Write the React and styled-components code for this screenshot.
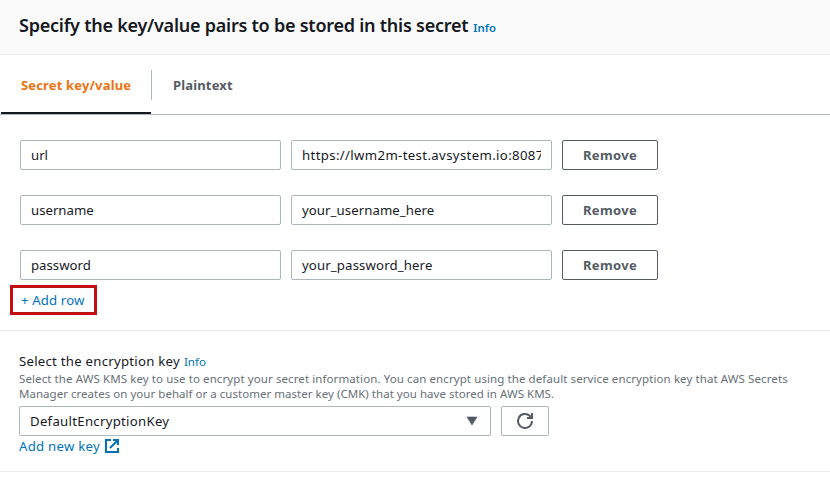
import React from "react";
import styled, { createGlobalStyle } from "styled-components";

const GlobalStyle = createGlobalStyle`
  *, *::before, *::after { box-sizing: border-box; }
  body {
    margin: 0;
    background: #fff;
    color: #16191f;
    font-family: "Noto Sans", "Open Sans", sans-serif;
    font-size: 13.2px;
  }
  button, input { font: inherit; margin: 0; }
`;

const Page = styled.main`
  width: 830px;
  height: 490px;
  overflow: hidden;
`;

const Header = styled.header`
  height: 55px;
  padding: 11px 19px 0;
  display: flex;
  align-items: baseline;
  gap: 5px;
  background: #fafafa;
  border-bottom: 1px solid #eaeded;
`;

const Title = styled.h1`
  margin: 0;
  font-size: 18px;
  line-height: 28px;
  font-weight: 600;
  letter-spacing: -0.24px;
  white-space: nowrap;
`;

const InfoLink = styled.a`
  color: #0073bb;
  font-size: ${(p) => (p.$strong ? "11.3px" : "11.5px")};
  font-weight: ${(p) => (p.$strong ? 600 : 400)};
  text-decoration: none;
`;

const Tabs = styled.nav`
  height: 60px;
  padding-left: 1px;
  display: flex;
  border-bottom: 1px solid #aab7b8;
`;

const Tab = styled.button`
  height: 59px;
  width: ${(p) => p.$width}px;
  padding: 2px 0 0 ${(p) => (p.$active ? 20 : 21)}px;
  border: 0;
  border-bottom: 2px solid ${(p) => (p.$active ? "#16191f" : "transparent")};
  background: none;
  color: ${(p) => (p.$active ? "#ec7211" : "#545b64")};
  font-size: 13px;
  font-weight: 700;
  letter-spacing: 0.16px;
  text-align: left;
  white-space: nowrap;
`;

const TabDivider = styled.span`
  width: 1px;
  height: 30px;
  margin-top: 15px;
  background: #aab7b8;
`;

const Pairs = styled.section`
  height: 216px;
  padding: 25px 10px 0;
  border-bottom: 1px solid #eaeded;
`;

const PairRow = styled.div`
  display: grid;
  grid-template-columns: 261px 261px 96px;
  column-gap: 10px;
  padding-left: 10px;
  margin-bottom: ${(p) => (p.$last ? 5 : 25)}px;
`;

const Field = styled.input`
  width: 100%;
  height: 30px;
  padding: 0 10px;
  border: 1px solid #aab7b8;
  border-radius: 2px;
  background: #fff;
  color: #16191f;
  outline: 0;
  letter-spacing: ${(p) => p.$tracking || 0}px;
`;

const RemoveButton = styled.button`
  height: 30px;
  padding: 0;
  border: 1px solid #545b64;
  border-radius: 2px;
  background: #fff;
  color: #545b64;
  font-size: 13px;
  font-weight: 700;
  letter-spacing: 0.35px;
`;

const AddRow = styled.button`
  display: block;
  width: 87px;
  height: 30px;
  padding: 0 0 0 8px;
  border: 3px solid #c40f11;
  background: #fff;
  color: #0073bb;
  letter-spacing: 0.13px;
  text-align: left;
  white-space: nowrap;
`;

const Encryption = styled.section`
  height: 141px;
  padding: 20px 19px 0;
  border-bottom: 1px solid #eaeded;
`;

const LabelLine = styled.div`
  height: 20px;
  display: flex;
  align-items: baseline;
  gap: 4px;
  line-height: 20px;
  white-space: nowrap;
`;

const Label = styled.label`
  letter-spacing: 0.25px;
`;

const Hint = styled.p`
  margin: 0 0 5px;
  height: 30px;
  color: #687078;
  font-size: 11.5px;
  line-height: 15px;
  white-space: nowrap;
`;

const HintLine = styled.span`
  display: block;
  letter-spacing: ${(p) => p.$tracking}px;
`;

const KeyRow = styled.div`
  display: flex;
  gap: 10px;
`;

const Select = styled.button`
  width: 472px;
  height: 30px;
  padding: 0 12px 0 10px;
  display: flex;
  align-items: center;
  justify-content: space-between;
  border: 1px solid #aab7b8;
  border-radius: 2px;
  background: #fff;
  color: #16191f;
  letter-spacing: 0.28px;
`;

const RefreshButton = styled.button`
  width: 48px;
  height: 30px;
  padding: 0;
  display: flex;
  align-items: center;
  justify-content: center;
  border: 1px solid #aab7b8;
  border-radius: 2px;
  background: #fff;
`;

const NewKeyLink = styled.a`
  display: flex;
  align-items: center;
  gap: 5px;
  height: 20px;
  color: #0073bb;
  letter-spacing: 0.25px;
  text-decoration: none;
  white-space: nowrap;
`;

const Caret = () => (
  <svg width="12" height="10" viewBox="0 0 12 10" aria-hidden="true">
    <path d="M1 1h10L6 9z" fill="#545b64" stroke="#545b64" strokeWidth=".6" />
  </svg>
);

const RefreshIcon = () => (
  <svg width="18" height="18" viewBox="0 0 18 18" fill="none" stroke="#545b64" strokeWidth="2" aria-hidden="true">
    <path d="M16 9a7 7 0 1 1-2.3-5.2L16 6" />
    <path d="M16 1v5h-5" />
  </svg>
);

const ExternalIcon = () => (
  <svg width="14" height="14" viewBox="0 0 14 14" fill="none" stroke="#0073bb" strokeWidth="2" aria-hidden="true">
    <path d="M6 1H1v12h12V9M8 1h5v5M13 1L5 9" />
  </svg>
);

const pairs = [
  { name: "url", value: "https://lwm2m-test.avsystem.io:8087", tracking: 0.36 },
  { name: "username", value: "your_username_here", tracking: 0.08 },
  { name: "password", value: "your_password_here", tracking: 0.14 },
];

export default function App() {
  return (
    <Page>
      <GlobalStyle />
      <Header>
        <Title>Specify the key/value pairs to be stored in this secret</Title>
        <InfoLink $strong>Info</InfoLink>
      </Header>
      <Tabs>
        <Tab $active $width={150}>Secret key/value</Tab>
        <TabDivider />
        <Tab $width={110}>Plaintext</Tab>
      </Tabs>
      <Pairs>
        {pairs.map((pair, i) => (
          <PairRow key={pair.name} $last={i === pairs.length - 1}>
            <Field defaultValue={pair.name} aria-label="Key" />
            <Field defaultValue={pair.value} $tracking={pair.tracking} aria-label="Value" />
            <RemoveButton>Remove</RemoveButton>
          </PairRow>
        ))}
        <AddRow>+ Add row</AddRow>
      </Pairs>
      <Encryption>
        <LabelLine>
          <Label>Select the encryption key</Label>
          <InfoLink>Info</InfoLink>
        </LabelLine>
        <Hint>
          <HintLine $tracking={0.095}>
            Select the AWS KMS key to use to encrypt your secret information. You can encrypt using the default service encryption key that AWS Secrets
          </HintLine>
          <HintLine $tracking={0.03}>
            Manager creates on your behalf or a customer master key (CMK) that you have stored in AWS KMS.
          </HintLine>
        </Hint>
        <KeyRow>
          <Select>
            DefaultEncryptionKey
            <Caret />
          </Select>
          <RefreshButton aria-label="Refresh">
            <RefreshIcon />
          </RefreshButton>
        </KeyRow>
        <NewKeyLink>
          Add new key
          <ExternalIcon />
        </NewKeyLink>
      </Encryption>
    </Page>
  );
}
